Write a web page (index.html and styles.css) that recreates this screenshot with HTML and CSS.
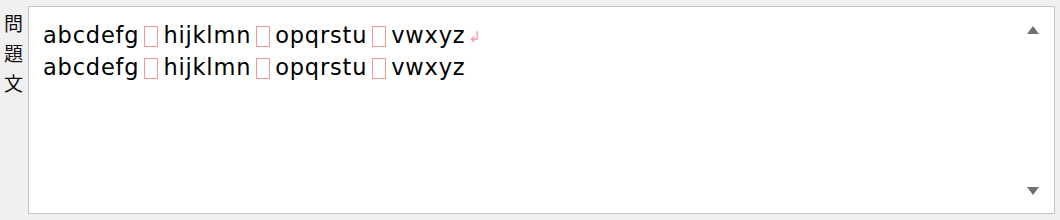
FILE: index.html
```html
<!DOCTYPE html>
<html lang="ja">
<head>
<meta charset="utf-8">
<link rel="stylesheet" href="styles.css">
</head>
<body>
<div class="field">
  <div class="label"><span>問</span><span>題</span><span>文</span></div>
  <div class="box">
    <div class="text">
      <div class="line">abcdefg<span class="sp"></span>hijklmn<span class="sp"></span>opqrstu<span class="sp"></span>vwxyz<span class="ret">↲</span></div>
      <div class="line">abcdefg<span class="sp"></span>hijklmn<span class="sp"></span>opqrstu<span class="sp"></span>vwxyz</div>
    </div>
    <div class="scroll">
      <span class="arrow up"></span>
      <span class="arrow down"></span>
    </div>
  </div>
</div>
</body>
</html>
```
FILE: styles.css
```css
html, body {
  margin: 0;
  padding: 0;
  background: #f0f0f0;
  width: 1060px;
  height: 220px;
  overflow: hidden;
}
.field {
  display: flex;
  padding: 6px 5px 0 4px;
  gap: 5px;
}
.label {
  display: flex;
  flex-direction: column;
  width: 19px;
  padding-top: 2px;
  font-family: "Noto Sans CJK JP", sans-serif;
  font-size: 19px;
  line-height: 30px;
  color: #111;
}
.box {
  flex: 1;
  height: 208px;
  box-sizing: border-box;
  border: 1px solid #c4c4c4;
  background: #fff;
  display: flex;
}
.text {
  flex: 1;
  padding: 12px 0 0 14px;
  font-family: "DejaVu Sans", sans-serif;
  font-size: 22.5px;
  letter-spacing: 0.8px;
  line-height: 32px;
  color: #000;
}
.line {
  white-space: pre;
  height: 32px;
}
.sp {
  display: inline-block;
  width: 12px;
  height: 19px;
  border: 1px solid #ee9a9a;
  margin: 0 5px 0 5px;
  vertical-align: -4px;
}
.ret {
  color: #f29aa4;
  font-size: 15px;
  letter-spacing: 0;
  margin-left: 3px;
  vertical-align: 1px;
}
.scroll {
  width: 22px;
  display: flex;
  flex-direction: column;
  justify-content: space-between;
  align-items: center;
  padding: 19px 0 18px;
  margin-right: 10px;
}
.arrow {
  width: 0;
  height: 0;
  border-left: 6px solid transparent;
  border-right: 6px solid transparent;
}
.up { border-bottom: 8px solid #707070; }
.down { border-top: 8px solid #707070; }
```
